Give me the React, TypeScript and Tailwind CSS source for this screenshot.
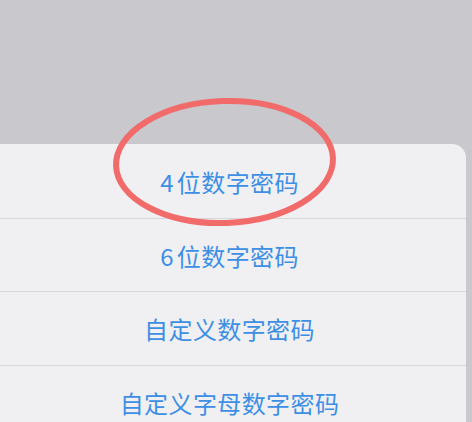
const options = ['4位数字密码', '6位数字密码', '自定义数字密码', '自定义字母数字密码'];

export default function App() {
  return (
    <div className="relative h-[422px] w-[472px] overflow-hidden bg-[#c9c8cd] font-['Noto_Sans_CJK_SC','Noto_Sans',sans-serif]">
      <div className="pt-[144px] pr-[6px]">
        <div className="rounded-tr-[14px] bg-[#f0f0f2]">
          {options.map((label, i) => {
            const digit = /^\d/.test(label);
            return (
              <div
                key={label}
                className={`flex h-[73.5px] items-center justify-center pr-[7px] pt-[2px] text-[24px] font-normal tracking-[0.4px] text-[#3d8fe5] ${
                  i > 0 ? 'border-t border-[#d6d6da]' : ''
                }`}
              >
                {digit ? (
                  <>
                    <span className="mr-[3px]">{label[0]}</span>
                    {label.slice(1)}
                  </>
                ) : (
                  label
                )}
              </div>
            );
          })}
        </div>
      </div>
      <svg className="pointer-events-none absolute left-0 top-0" width="472" height="422" viewBox="0 0 472 422">
        <ellipse
          cx="224.5"
          cy="162"
          rx="108.5"
          ry="61"
          fill="none"
          stroke="#f26b6b"
          strokeWidth="6"
          transform="rotate(-2 224.5 162)"
        />
      </svg>
    </div>
  );
}
